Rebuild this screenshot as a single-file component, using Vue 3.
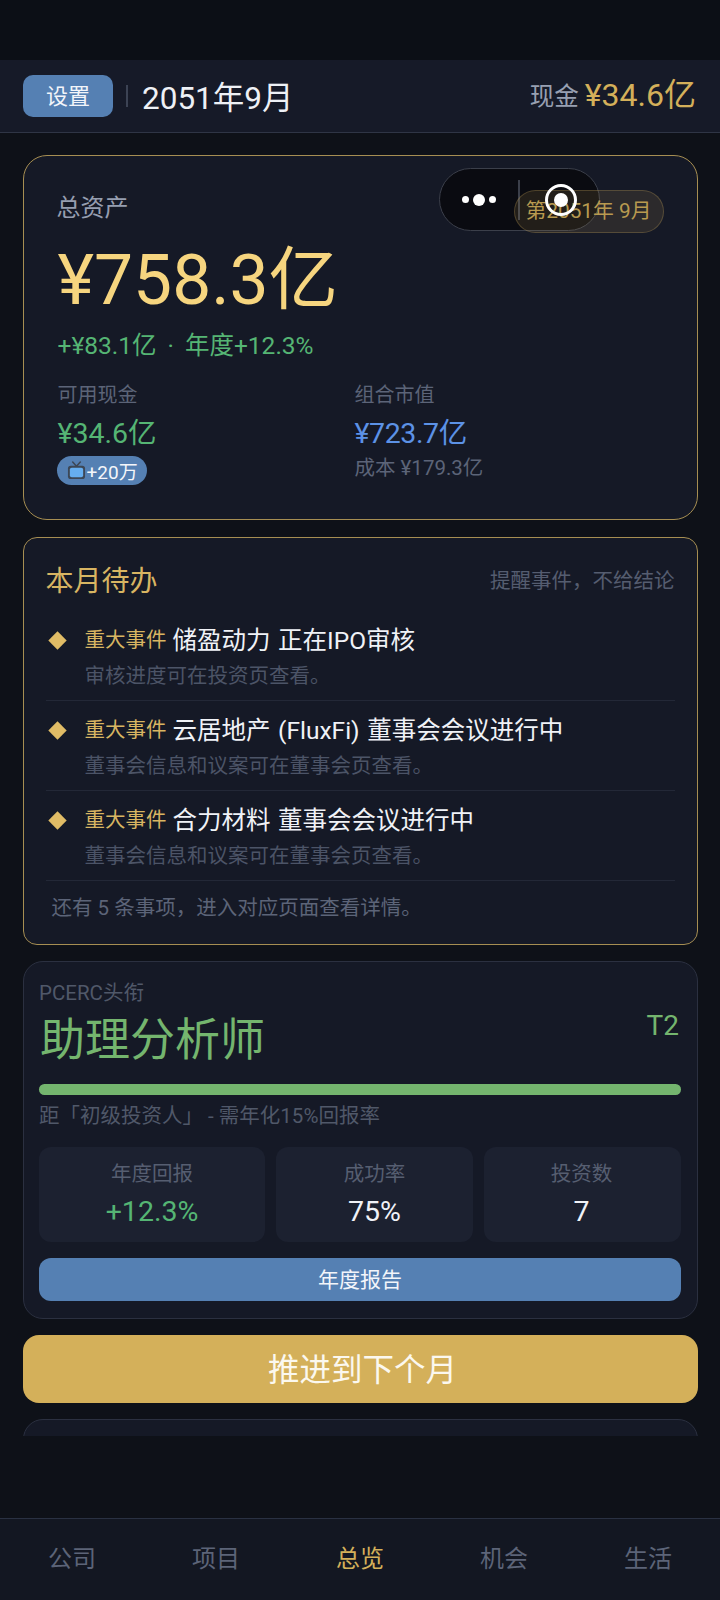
<script setup>
const todos = [
  { title: '储盈动力 正在IPO审核', desc: '审核进度可在投资页查看。' },
  { title: '云居地产 (FluxFi) 董事会会议进行中', desc: '董事会信息和议案可在董事会页查看。' },
  { title: '合力材料 董事会会议进行中', desc: '董事会信息和议案可在董事会页查看。' }
]
const stats = [
  { label: '年度回报', value: '+12.3%', cls: 'green', w: 'a' },
  { label: '成功率', value: '75%', cls: '', w: 'b' },
  { label: '投资数', value: '7', cls: '', w: 'c' }
]
const tabs = ['公司', '项目', '总览', '机会', '生活']
</script>

<template>
  <div class="page">
    <div class="status"></div>
    <header class="top">
      <div class="top-left">
        <button class="settings">设置</button>
        <span class="vline"></span>
        <span class="date">2051年9月</span>
      </div>
      <div class="top-right"><span class="cash-label">现金</span> <span class="cash-val">¥34.6亿</span></div>
    </header>

    <main class="main">
      <section class="card assets">
        <div class="assets-head">
          <span class="assets-label">总资产</span>
          <span class="turn">第2051年 9月</span>
        </div>
        <div class="total">¥758.3亿</div>
        <div class="delta">+¥83.1亿<span class="sep">·</span>年度+12.3%</div>
        <div class="split">
          <div class="col">
            <div class="k">可用现金</div>
            <div class="v green">¥34.6亿</div>
            <span class="ad">
              <svg class="tv" viewBox="0 0 20 20" width="19" height="19">
                <path d="M6 1 10 5.5 14 1" fill="none" stroke="#3d4756" stroke-width="1.6" stroke-linecap="round" stroke-linejoin="round"/>
                <rect x="1" y="5" width="18" height="14" rx="3" fill="#3d4756"/>
                <rect x="3" y="7" width="14" height="10" rx="2" fill="#66aef0"/>
              </svg>+20万</span>
          </div>
          <div class="col">
            <div class="k">组合市值</div>
            <div class="v blue">¥723.7亿</div>
            <div class="cost">成本 ¥179.3亿</div>
          </div>
        </div>
      </section>

      <section class="card todo">
        <div class="todo-head">
          <span class="todo-title">本月待办</span>
          <span class="todo-note">提醒事件，不给结论</span>
        </div>
        <div class="todo-list">
          <div v-for="t in todos" :key="t.title" class="todo-item">
            <span class="diamond"></span>
            <div class="todo-body">
              <div class="todo-line"><span class="tag">重大事件</span> <span class="todo-text">{{ t.title }}</span></div>
              <div class="todo-desc">{{ t.desc }}</div>
            </div>
          </div>
        </div>
        <div class="todo-foot">还有 5 条事项，进入对应页面查看详情。</div>
      </section>

      <section class="card rank">
        <div class="rank-label">PCERC头衔</div>
        <div class="rank-row">
          <span class="rank-title">助理分析师</span>
          <span class="rank-tier">T2</span>
        </div>
        <div class="bar"><div class="bar-fill"></div></div>
        <div class="rank-hint">距「初级投资人」 - 需年化15%回报率</div>
        <div class="stats">
          <div v-for="s in stats" :key="s.label" class="stat" :class="s.w">
            <div class="stat-k">{{ s.label }}</div>
            <div class="stat-v" :class="s.cls">{{ s.value }}</div>
          </div>
        </div>
        <button class="report">年度报告</button>
      </section>

      <button class="advance">推进到下个月</button>
      <section class="card stub"></section>
    </main>

    <div class="spacer"></div>

    <nav class="tabs">
      <span v-for="t in tabs" :key="t" class="tab" :class="{ on: t === '总览' }">{{ t }}</span>
    </nav>

    <div class="capsule">
      <div class="dots"><i></i><i class="big"></i><i></i></div>
      <span class="cap-line"></span>
    </div>
    <div class="ring"><i></i></div>
  </div>
</template>

<style>
html, body { margin: 0; background: #0e1118; }
</style>

<style scoped>
.page {
  position: relative;
  width: 720px;
  height: 1600px;
  display: flex;
  flex-direction: column;
  overflow: hidden;
  background: #0e1118;
  font-family: Roboto, "Noto Sans CJK SC", sans-serif;
  color: #e8ebf2;
  text-spacing-trim: space-all;
}
button { font-family: inherit; border: 0; padding: 0; }
.status { height: 60px; flex: none; background: #0c0f16; }
.top {
  height: 72px;
  flex: none;
  background: #161a28;
  border-bottom: 1px solid #2f3545;
  display: flex;
  align-items: center;
  justify-content: space-between;
  padding: 0 24px 0 23px;
}
.top-left { display: flex; align-items: center; }
.settings {
  width: 90px;
  height: 42px;
  border-radius: 10px;
  background: #5580b3;
  color: #f2f5fa;
  font-size: 22px;
  padding-bottom: 4px;
}
.vline { width: 2px; height: 22px; background: #3c4354; margin: 0 14px 0 13px; }
.date { font-size: 31.5px; line-height: 40px; color: #eef1f6; margin-top: 6px; }
.top-right { display: flex; align-items: center; gap: 6px; margin-top: -2px; }
.cash-label { font-size: 24.5px; color: #98a0b2; margin-top: -2px; }
.cash-val { font-size: 32px; line-height: 40px; color: #d4b05a; }

.main {
  height: 1303px;
  flex: none;
  overflow: hidden;
  padding: 22px 22px 0 23px;
  box-sizing: border-box;
  display: flex;
  flex-direction: column;
  align-items: stretch;
}
.card {
  flex: none;
  box-sizing: border-box;
  background: #151926;
  border: 1.5px solid #2b3040;
}
.assets {
  height: 365px;
  border-radius: 24px;
  border: 1.5px solid #a68e52;
  padding: 30.5px 33.5px 0 33.5px;
}
.assets-head { display: flex; justify-content: space-between; align-items: flex-start; height: 48px; }
.assets-label { font-size: 24px; line-height: 42px; color: #969eb0; margin-left: -1px; }
.turn {
  position: relative;
  z-index: 2;
  margin-top: 3px;
  height: 43px;
  width: 150px;
  box-sizing: border-box;
  border-radius: 22px;
  background: rgba(212, 176, 90, 0.12);
  border: 1px solid rgba(212, 176, 90, 0.25);
  color: #b89a50;
  font-size: 20.8px;
  line-height: 41px;
  text-align: center;
}
.total { font-size: 69.5px; line-height: 84px; color: #f6d57f; margin-top: 4px; }
.delta { font-size: 24.5px; line-height: 36px; color: #55b574; margin-top: 5px; }
.sep { margin: 0 11px; }
.split { display: flex; margin-top: 17px; }
.col { width: 297px; }
.k { font-size: 20px; line-height: 28px; color: #5c6478; }
.v { font-size: 28.5px; line-height: 40px; margin-top: 5px; }
.green { color: #55b574; }
.blue { color: #5c92e6; letter-spacing: -0.4px; }
.cost { font-size: 20.5px; line-height: 28px; color: #5c6478; }
.ad {
  display: inline-flex;
  align-items: center;
  height: 29px;
  width: 90px;
  box-sizing: border-box;
  margin: 2px 0 0 -1px;
  padding-left: 10px;
  border-radius: 15px;
  background: #5580b3;
  color: #f4f6fa;
  font-size: 19px;
}
.tv { flex: none; margin: 0 1px 0 0; }

.todo {
  height: 408px;
  margin-top: 17px;
  border-radius: 14px;
  border: 1.5px solid #a68e52;
  padding: 0 22.5px 0 21.5px;
}
.todo-head { display: flex; justify-content: space-between; align-items: center; height: 82px; padding-bottom: 1px; box-sizing: border-box; }
.todo-title { font-size: 28px; color: #d8b562; }
.todo-note { font-size: 20.5px; color: #555d70; }
.todo-list { display: flex; flex-direction: column; }
.todo-item {
  display: flex;
  padding: 9px 0 9px;
  border-bottom: 1px solid #232837;
}
.todo-item:first-child { padding-top: 0; padding-bottom: 9px; }
.diamond {
  flex: none;
  width: 13px;
  height: 13px;
  margin: 14px 0 0 5px;
  background: #e0bc66;
  transform: rotate(45deg);
}
.todo-body { margin-left: 21px; }
.todo-line { display: flex; align-items: center; gap: 6px; height: 32px; margin-top: 2px; }
.tag { font-size: 20.5px; color: #d8b562; }
.todo-text { font-size: 24.5px; color: #f0f2f7; white-space: pre; word-spacing: 1.5px; }
.todo-desc { font-size: 20.5px; line-height: 30px; margin-top: 7px; color: #4c5467; }
.todo-foot { font-size: 20.5px; line-height: 54px; padding-left: 6px; color: #5c6478; }

.rank {
  height: 358px;
  margin-top: 16px;
  border-radius: 20px;
  padding: 15px 16px 0 15px;
}
.rank-label { font-size: 20.5px; line-height: 32px; color: #505869; }
.rank-row { display: flex; justify-content: space-between; align-items: flex-start; height: 75px; padding: 0 2px 0 1px; }
.rank-title { font-size: 45px; line-height: 64px; color: #74b56e; }
.rank-tier { font-size: 28px; line-height: 36px; margin-top: -1px; color: #74b56e; }
.bar { height: 11px; border-radius: 6px; background: #232837; }
.bar-fill { height: 100%; border-radius: 6px; background: #74b56e; }
.rank-hint { font-size: 20.5px; line-height: 30px; margin-top: 6px; color: #505869; }
.stats { display: flex; gap: 11px; margin-top: 16px; }
.stat {
  height: 95px;
  box-sizing: border-box;
  border-radius: 12px;
  background: #1c2130;
  text-align: center;
  padding-top: 13px;
}
.stat.a { width: 226px; }
.stat.b { width: 197px; }
.stat.c { width: 197px; padding-right: 2px; }
.stat-k { font-size: 20.5px; line-height: 28px; color: #565e71; }
.stat-v { font-size: 28.5px; line-height: 40px; margin-top: 4px; color: #f0f2f7; }
.stat-v.green { color: #55b574; }
.report {
  display: block;
  width: 100%;
  height: 43px;
  margin-top: 16px;
  border-radius: 12px;
  background: #5580b3;
  color: #f2f5fa;
  font-size: 21px;
  padding-bottom: 3px;
}
.advance {
  flex: none;
  height: 68px;
  margin-top: 16px;
  border-radius: 16px;
  background: #d4b05a;
  color: #fbf8ef;
  font-size: 31.5px;
  padding: 0 0 4px 4px;
}
.stub { height: 60px; margin-top: 16px; border-radius: 20px; }
.spacer { flex: 1; }
.tabs {
  height: 82px;
  flex: none;
  box-sizing: border-box;
  background: #131722;
  border-top: 1px solid #2a3142;
  display: flex;
}
.tab {
  flex: 1;
  text-align: center;
  font-size: 24px;
  line-height: 81px;
  color: #5c6478;
}
.tab.on { color: #d4b05a; }

.capsule {
  position: absolute;
  z-index: 1;
  left: 439px;
  top: 168px;
  width: 161px;
  height: 63px;
  box-sizing: border-box;
  border-radius: 32px;
  border: 1.5px solid #3b3f4a;
  background: rgba(8, 9, 14, 0.82);
}
.dots {
  position: absolute;
  left: 22px;
  top: 24px;
  display: flex;
  align-items: center;
  gap: 4px;
  height: 13px;
}
.dots i { width: 7px; height: 7px; border-radius: 50%; background: #fff; }
.dots i.big { width: 12px; height: 12px; }
.cap-line { position: absolute; left: 78px; top: 11px; width: 1.5px; height: 40px; background: #3b3f4a; }
.ring {
  position: absolute;
  z-index: 3;
  left: 545px;
  top: 184px;
  width: 32px;
  height: 32px;
  box-sizing: border-box;
  border-radius: 50%;
  border: 3.5px solid #fff;
  display: flex;
  align-items: center;
  justify-content: center;
}
.ring i { width: 14px; height: 14px; border-radius: 50%; background: #fff; }
</style>
